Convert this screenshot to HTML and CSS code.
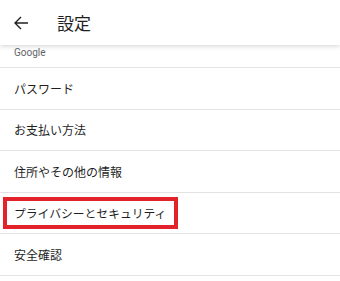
FILE: index.html
```html
<!DOCTYPE html>
<html lang="ja">
<head>
<meta charset="utf-8">
<link rel="stylesheet" href="styles.css">
</head>
<body>
<header class="appbar">
  <svg class="back" width="16" height="16" viewBox="0 0 16 16"><path d="M15 8H2M8 2L2 8l6 6" fill="none" stroke="#202124" stroke-width="1.4"/></svg>
  <h1 class="title">設定</h1>
</header>
<div class="clip">
  <div class="section-label">Google</div>
</div>
<ul class="list">
  <li class="row">パスワード</li>
  <li class="row">お支払い方法</li>
  <li class="row">住所やその他の情報</li>
  <li class="row"><span class="highlight">プライバシーとセキュリティ</span></li>
  <li class="row">安全確認</li>
</ul>
</body>
</html>
```
FILE: styles.css
```css
html, body {
  margin: 0;
  padding: 0;
  background: #fff;
  font-family: "Noto Sans CJK JP", "Noto Sans", sans-serif;
  color: #1f1f1f;
  overflow: hidden;
}
.appbar {
  position: relative;
  z-index: 2;
  height: 45px;
  display: flex;
  align-items: center;
  background: #fff;
  box-shadow: 0 1px 5px rgba(0,0,0,0.18);
}
.back {
  margin-left: 13px;
  width: 16px;
  height: 16px;
}
.title {
  margin: 0 0 0 28px;
  font-size: 17px;
  font-weight: 400;
}
.clip {
  height: 22px;
  overflow: hidden;
  border-bottom: 1px solid #e3e3e3;
  display: flex;
  align-items: flex-end;
}
.section-label {
  font-family: Roboto, "Noto Sans", sans-serif;
  font-size: 10px;
  color: #5f6368;
  padding: 0 0 9px 14px;
}
.list {
  list-style: none;
  margin: 0;
  padding: 0;
}
.row {
  height: 40.6px;
  display: flex;
  align-items: center;
  padding-left: 14px;
  font-size: 12px;
  border-bottom: 1px solid #e3e3e3;
}
.highlight {
  margin-left: -11px;
  padding: 3px 8px 3px 7px;
  border: 4px solid #e3232b;
  line-height: 18px;
  font-size: 11.8px;
}
```
